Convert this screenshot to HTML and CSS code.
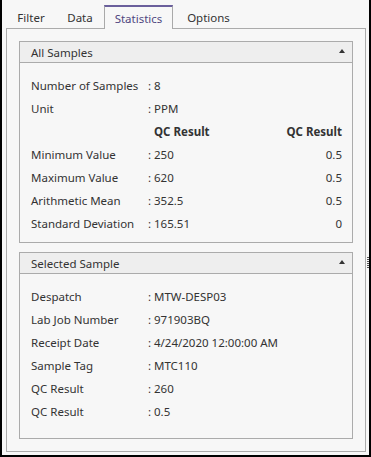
FILE: index.html
```html
<!DOCTYPE html>
<html lang="en">
  <head>
    <meta charset="UTF-8" />
    <meta name="viewport" content="width=device-width, initial-scale=1.0" />
    <title>Statistics</title>
    <link rel="stylesheet" href="styles.css">
  </head>
  <body>
    <div class="window">
      <div class="tabs">
        <div class="tab tab-filter">Filter</div>
        <div class="tab tab-data">Data</div>
        <div class="tab tab-stats active">Statistics</div>
        <div class="tab tab-options">Options</div>
      </div>

      <div class="main">
        <div class="panel">
          <div class="group">
            <div class="group-header">
              <span>All Samples</span>
              <span class="collapse"></span>
            </div>
            <div class="group-body stats">
              <span class="label">Number of Samples</span><span class="colon">:</span><span class="value">8</span><span></span>
              <span class="label">Unit</span><span class="colon">:</span><span class="value">PPM</span><span></span>
              <span></span><span></span><span class="value bold">QC Result</span><span class="right bold">QC Result</span>
              <span class="label">Minimum Value</span><span class="colon">:</span><span class="value">250</span><span class="right">0.5</span>
              <span class="label">Maximum Value</span><span class="colon">:</span><span class="value">620</span><span class="right">0.5</span>
              <span class="label">Arithmetic Mean</span><span class="colon">:</span><span class="value">352.5</span><span class="right">0.5</span>
              <span class="label">Standard Deviation</span><span class="colon">:</span><span class="value">165.51</span><span class="right">0</span>
            </div>
          </div>

          <div class="group">
            <div class="group-header">
              <span>Selected Sample</span>
              <span class="collapse"></span>
            </div>
            <div class="group-body selected">
              <span class="label">Despatch</span><span class="colon">:</span><span class="value">MTW-DESP03</span>
              <span class="label">Lab Job Number</span><span class="colon">:</span><span class="value">971903BQ</span>
              <span class="label">Receipt Date</span><span class="colon">:</span><span class="value">4/24/2020 12:00:00 AM</span>
              <span class="label">Sample Tag</span><span class="colon">:</span><span class="value">MTC110</span>
              <span class="label">QC Result</span><span class="colon">:</span><span class="value">260</span>
              <span class="label">QC Result</span><span class="colon">:</span><span class="value">0.5</span>
            </div>
          </div>
        </div>

        <div class="grip-col">
          <div class="grip"></div>
        </div>
      </div>
    </div>
  </body>
</html>
```

FILE: styles.css
```css
body {
  margin: 0;
  font-family: "Noto Sans", "Open Sans", sans-serif;
  font-size: 11.5px;
  color: #333333;
  background-color: #f7f7f7;
}
.window {
  width: 371px;
  height: 457px;
  box-sizing: border-box;
  border: 2px solid #000000;
  border-top: none;
  background-color: #f7f7f7;
  display: flex;
  flex-direction: column;
}
.tabs {
  display: flex;
  padding: 5px 0 0 4px;
  height: 28px;
  box-sizing: border-box;
}
.tab {
  height: 23px;
  box-sizing: border-box;
  display: flex;
  align-items: center;
  justify-content: center;
  padding-top: 1px;
}
.tab-filter {
  width: 50px;
}
.tab-data {
  width: 48px;
}
.tab-stats {
  width: 69px;
}
.tab-options {
  width: 71px;
}
.tab.active {
  color: #4f4680;
  border: 1px solid #a9a9a9;
  border-top: 2px solid #6a5f9c;
  border-bottom: none;
  height: 24px;
  background-color: #f7f7f7;
  position: relative;
  z-index: 1;
  padding-top: 0;
}
.main {
  flex: 1;
  display: flex;
  padding-bottom: 3px;
}
.panel {
  flex: 1;
  margin-left: 4px;
  border: 1px solid #ababab;
  padding: 12px 12px 12px 12px;
  display: flex;
  flex-direction: column;
  gap: 9px;
}
.grip-col {
  width: 3px;
  display: flex;
  align-items: flex-start;
  padding-top: 229px;
  box-sizing: border-box;
}
.grip {
  margin-left: 1px;
  width: 2px;
  height: 12px;
  background: repeating-linear-gradient(to bottom, #555555 0, #555555 1px, transparent 1px, transparent 2px);
}
.group {
  border: 1px solid #ababab;
}
.group-header {
  height: 20px;
  background-color: #eeeeee;
  border-bottom: 1px solid #ababab;
  display: flex;
  align-items: center;
  justify-content: space-between;
  padding: 0 7px 0 11px;
}
.collapse {
  width: 0;
  height: 0;
  border-left: 3.5px solid transparent;
  border-right: 3.5px solid transparent;
  border-bottom: 4px solid #333333;
  margin-bottom: 2px;
}
.group-body {
  display: grid;
  grid-auto-rows: 23px;
  align-items: center;
  padding: 11px 10px 7px 11px;
}
.stats {
  grid-template-columns: 117px 6px 1fr auto;
}
.selected {
  grid-template-columns: 117px 6px 1fr;
  padding-bottom: 15px;
}
.right {
  text-align: right;
}
.bold {
  font-weight: bold;
}
```
